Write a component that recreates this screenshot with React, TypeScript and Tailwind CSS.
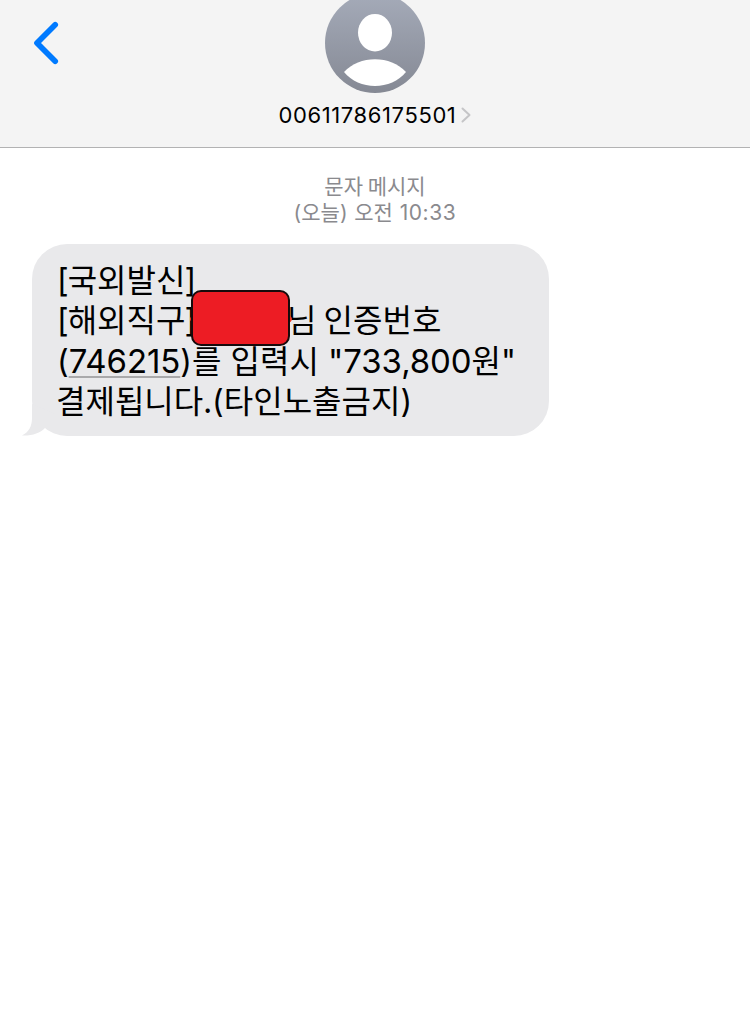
const korean = "font-['Noto_Sans_CJK_KR',sans-serif]";
const latin = "font-['Inter',sans-serif]";

const Header = () => {
  return (
    <header className="relative flex h-[148px] flex-col items-center overflow-hidden border-b border-[#b2b2b3] bg-[#f4f4f4]">
      <button aria-label="Back" className="absolute left-8 top-5">
        <svg className="h-[46px] w-7" viewBox="0 0 28 46" fill="none">
          <path d="M23.200 4.800 5 23 23.200 41.200" stroke="#007aff" strokeWidth="5.700" strokeLinecap="round" strokeLinejoin="round" />
        </svg>
      </button>

      <svg className="-mt-[7px] h-[100px] w-[100px] shrink-0" viewBox="0 0 100 100">
        <defs>
          <linearGradient id="avatar" x1="0" y1="0" x2="0" y2="1">
            <stop offset="0" stopColor="#a5abb9" />
            <stop offset="1" stopColor="#858994" />
          </linearGradient>
        </defs>
        <circle cx="50" cy="50" r="50" fill="url(#avatar)" />
        <ellipse cx="50" cy="39.7" rx="17" ry="18.8" fill="#fff" />
        <path d="M19 79C27 70.500 38 66.300 50 66.300S73 70.500 81 79C73.500 88 62 93 50 93S26.500 88 19 79Z" fill="#fff" />
      </svg>

      <div className="mt-2 flex h-7 items-center gap-[5px]">
        <span className={`${latin} text-[22px] leading-7 tracking-[0.6px] text-black`}>00611786175501</span>
        <svg className="h-4 w-[10px]" viewBox="0 0 10 16" fill="none">
          <path d="M1.500 1.500 8.500 8 1.500 14.500" stroke="#c5c5c7" strokeWidth="2" strokeLinecap="round" strokeLinejoin="round" />
        </svg>
      </div>
    </header>
  );
};

const Message = () => {
  return (
    <div className={`${korean} relative ml-8 mt-[18px] h-[192px] w-[517px] rounded-[35px] bg-[#e9e9eb] pl-[25px] pt-[14px] text-[32px] leading-10 text-black`}>
      {/* bubble tail */}
      <svg className="absolute -left-[11px] bottom-0 h-8 w-9" viewBox="0 0 36 32">
        <path d="M11 0V14C11 22 8 28 1 31.500C11 32 19 29 24 24L34 10Z" fill="#e9e9eb" />
      </svg>

      <div>
        <p className="h-10 whitespace-nowrap">
          <span className={`${latin} tracking-[-1px]`}>[</span>국외발신<span className={`${latin} -ml-px`}>]</span>
        </p>
        <p className="flex h-[41px] whitespace-nowrap">
          <span className="w-[230px]">
            <span className={`${latin} tracking-[-1px]`}>[</span>해외직구<span className={`${latin} -ml-px`}>]</span>
          </span>
          <span>님 인증번호</span>
        </p>
        <p className="h-10 whitespace-nowrap">
          <span className={latin}>(</span>
          <span className={`${latin} text-[33px] tracking-[-0.1px] underline decoration-[#a9a9ab] decoration-2 underline-offset-[3px]`}>746215</span>
          <span className={latin}>)</span>
          <span className="[word-spacing:2px]">를 입력시 </span>
          <span className={`${latin} text-[33px] tracking-[-0.1px]`}>"733,800</span>
          <span>원</span>
          <span className={latin}>"</span>
        </p>
        <p className="-ml-px h-10 whitespace-nowrap">
          결제됩니다.<span className={latin}>(</span>타인노출금지<span className={latin}>)</span>
        </p>
      </div>

      {/* hidden name */}
      <div className="absolute left-[158px] top-[63px] h-6 w-[102px] rounded-[50%] bg-[#ee3a24]" />
      <div className="absolute left-[159px] top-[46px] h-[56px] w-[99px] rounded-[10px] border-2 border-[#160a0b] bg-[#ed1c24]" />
    </div>
  );
};

export default function App() {
  return (
    <main className="min-h-screen bg-white">
      <Header />
      <div className={`${korean} mt-6 flex flex-col items-center text-[21px] leading-[26px] text-[#8a8a8e]`}>
        <p>문자 메시지</p>
        <p className="[word-spacing:2px]">
          <span className={latin}>(</span>오늘<span className={latin}>)</span> 오전{" "}
          <span className={`${latin} tracking-[0.6px]`}>10:33</span>
        </p>
      </div>
      <Message />
    </main>
  );
}
